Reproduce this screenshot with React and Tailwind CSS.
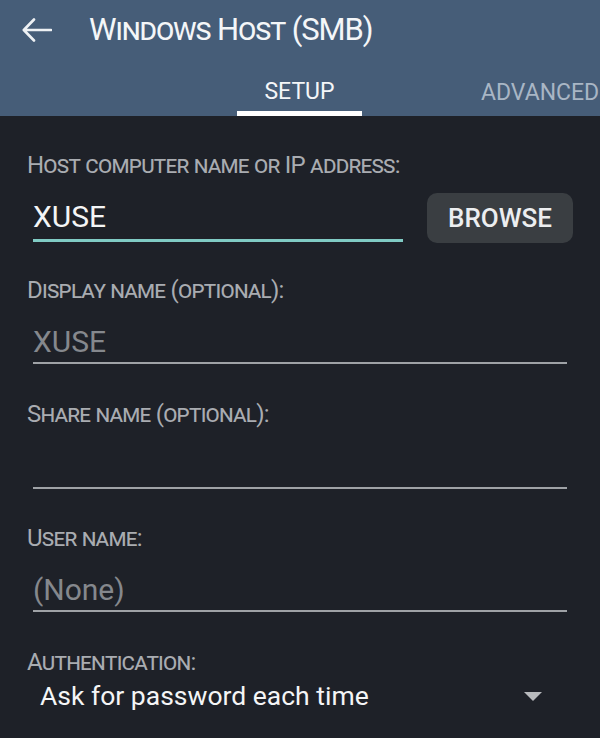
const FONT = { fontFamily: "Roboto, 'Noto Sans', sans-serif" };

function Label({ children, className = "" }) {
  return (
    <div
      className={`-ml-[1px] h-[30px] leading-[30px] text-[24px] text-[#a9acb1] [font-variant:small-caps] tracking-[-0.75px] whitespace-nowrap ${className}`}
    >
      {children}
    </div>
  );
}

function Field({ value, className = "" }) {
  return (
    <div
      className={`ml-[5px] mr-[6px] h-[44px] border-b-2 border-[#9fa2a6] flex items-center text-[30px] text-[#85888d] ${className}`}
    >
      {value}
    </div>
  );
}

export default function App() {
  return (
    <div className="w-[600px] h-[738px] overflow-hidden bg-[#1e2128]" style={FONT}>
      <div className="bg-[#465d78] h-[116px] flex flex-col">
        <div className="h-[60px] flex items-center">
          <svg className="ml-[22px]" width="30" height="24" viewBox="0 0 30 24" fill="none">
            <path
              d="M29 12 H2 M12 1.5 L1.8 12 L12 22.5"
              stroke="#eef1f4"
              strokeWidth="2.6"
              strokeLinecap="round"
              strokeLinejoin="round"
            />
          </svg>
          <span className="ml-[37px] text-[31px] text-[#f4f6f8] [font-variant:small-caps] tracking-[-1.1px]">
            Windows Host (SMB)
          </span>
        </div>
        <div className="flex-1 flex">
          <div className="ml-[237px] w-[125px] flex flex-col items-center">
            <div className="flex-1 flex items-center text-[23px] text-[#f4f6f8] pt-[14px]">
              SETUP
            </div>
            <div className="h-[5px] w-full bg-white" />
          </div>
          <div className="ml-[119px] flex items-center pt-[10px] text-[23px] text-[#a9b6c5] whitespace-nowrap">
            ADVANCED
          </div>
        </div>
      </div>

      <div className="pl-[28px] pr-[27px] pt-[34px]">
        <Label>Host computer name or IP address:</Label>
        <div className="mt-[13px] flex items-center gap-[24px]">
          <div className="ml-[5px] flex-1 h-[47px] border-b-[3px] border-[#80cbc4] flex items-center text-[30px] text-[#f4f5f6]">
            XUSE
          </div>
          <button className="w-[146px] h-[50px] rounded-[10px] bg-[#3a3e42] text-[#eceef0] text-[26px] font-medium">
            BROWSE
          </button>
        </div>

        <Label className="mt-[32px]">Display name (optional):</Label>
        <Field value="XUSE" className="mt-[15px]" />

        <Label className="mt-[35px]">Share name (optional):</Label>
        <Field value="" className="mt-[16px]" />

        <Label className="mt-[34px]">User name:</Label>
        <Field value="(None)" className="mt-[15px]" />

        <Label className="mt-[35px]">Authentication:</Label>
        <div className="h-[38px] flex items-center">
          <span className="ml-[12px] text-[26.5px] text-[#f4f5f6]">Ask for password each time</span>
          <svg className="ml-auto mr-[31px]" width="18" height="9" viewBox="0 0 18 9">
            <path d="M0 0 L18 0 L9 9 Z" fill="#b8babd" />
          </svg>
        </div>
      </div>
    </div>
  );
}
